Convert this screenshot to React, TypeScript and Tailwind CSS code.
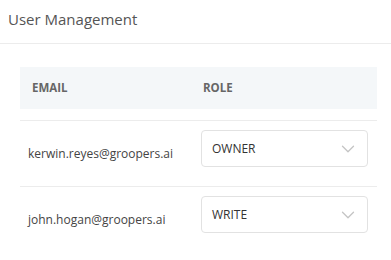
import { ChevronDown } from "lucide-react";

const users = [
  { email: "kerwin.reyes@groopers.ai", role: "OWNER" },
  { email: "john.hogan@groopers.ai", role: "WRITE" },
];

export default function App() {
  return (
    <div className="w-[391px] h-[260px] bg-white font-['Open_Sans',sans-serif] overflow-hidden">
      <div className="h-[44px] px-[8px] flex items-center border-b border-[#ececec]">
        <h1 className="text-[15px] text-[#555] pb-[4px]">User Management</h1>
      </div>

      <div className="ml-[20px] mr-[14px] mt-[23px]">
        <div className="flex h-[42px] items-center bg-[#f4f7f9] text-[11.5px] font-bold text-[#666]">
          <div className="w-[171px] pl-[12px]">EMAIL</div>
          <div className="pl-[12px]">ROLE</div>
        </div>
        <div className="h-[11px]" />
        {users.map((u) => (
          <div key={u.email} className="flex items-center border-t border-[#ececec]">
            <div className="w-[171px] pl-[8px] text-[12px] text-[#444]">{u.email}</div>
            <div className="pl-[10px] pt-[9px] pb-[19px]">
              <div className="w-[167px] h-[37px] border border-[#e2e2e2] rounded-[4px] flex items-center justify-between pl-[10px] pr-[8px]">
                <span className="text-[12px] text-[#333]">{u.role}</span>
                <ChevronDown size={22} strokeWidth={1.4} className="text-[#c4c4c4]" />
              </div>
            </div>
          </div>
        ))}
      </div>
    </div>
  );
}
